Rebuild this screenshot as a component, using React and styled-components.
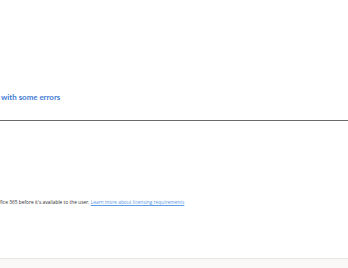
import React from 'react';
import styled, { createGlobalStyle } from 'styled-components';

const GlobalStyle = createGlobalStyle`
  html, body {
    margin: 0;
    padding: 0;
    background: #ffffff;
  }
  body {
    font-family: "Open Sans", "Liberation Sans", sans-serif;
  }
`;

const Page = styled.div`
  width: 348px;
  height: 268px;
  overflow: hidden;
  display: flex;
  flex-direction: column;
  background: #ffffff;
`;

const Header = styled.div`
  padding-top: 92px;
  height: 28px;
  border-bottom: 1px solid #6b6b6b;
`;

const Title = styled.h2`
  margin: 0 0 0 1px;
  font-family: Lato, "Noto Sans", sans-serif;
  font-size: 7.9px;
  font-weight: 700;
  color: #3f7bd6;
  line-height: 10px;
  white-space: nowrap;
`;

const Body = styled.div`
  flex: 1;
  padding-top: 77px;
`;

const Note = styled.p`
  margin: 0;
  font-family: "Open Sans", "Liberation Sans", sans-serif;
  font-size: 4.85px;
  line-height: 8px;
  color: #323130;
  white-space: nowrap;
`;

const Link = styled.a`
  color: #5a9be6;
  text-decoration: underline;
`;

const Footer = styled.div`
  height: 9px;
  border-top: 1px solid #e8e6e4;
  background: #faf9f8;
`;

export default function App() {
  return (
    <>
      <GlobalStyle />
      <Page>
        <Header>
          <Title>with some errors</Title>
        </Header>
        <Body>
          <Note>
            fice 365 before it's available to the user.{' '}
            <Link href="#">Learn more about licensing requirements</Link>
          </Note>
        </Body>
        <Footer />
      </Page>
    </>
  );
}
